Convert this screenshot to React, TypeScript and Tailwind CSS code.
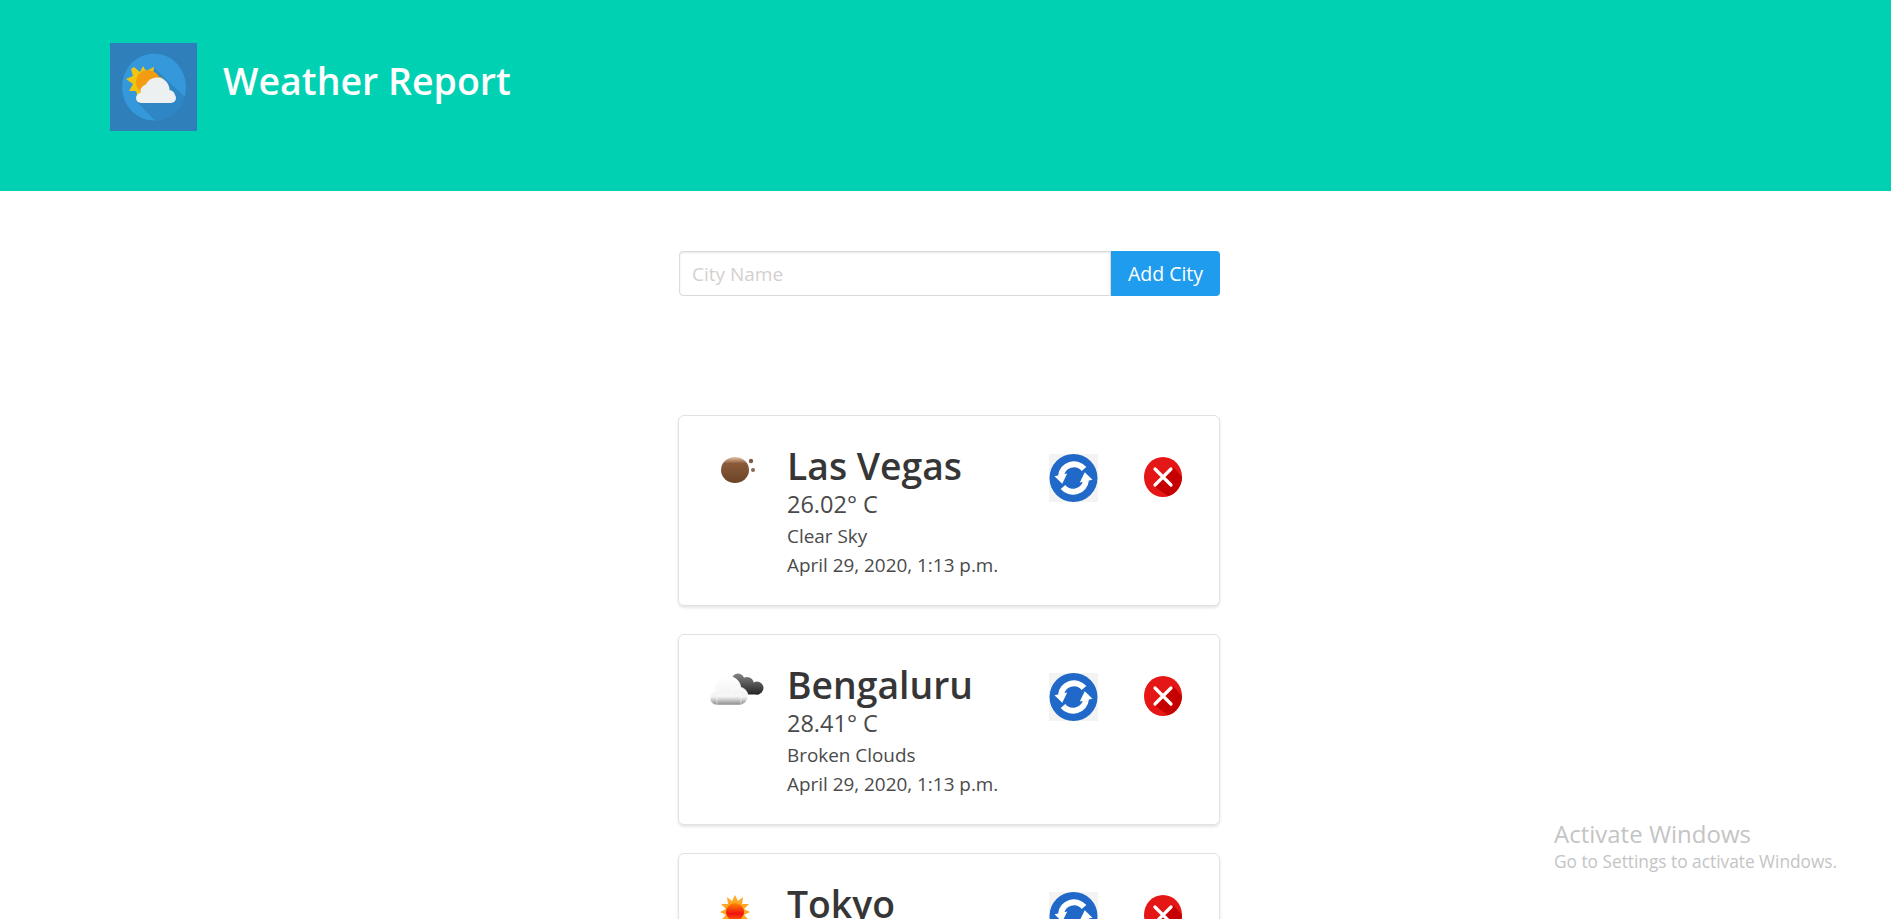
import React from 'react';

const font = { fontFamily: '"Open Sans", "Noto Sans", sans-serif' };

const LogoIcon = () => (
  <svg viewBox="0 0 87 88" className="w-[87px] h-[88px] shrink-0">
    <rect width="87" height="88" fill="#2e7fba" />
    <ellipse cx="44" cy="44" rx="32" ry="33.5" fill="#3498db" />
    <path d="M44 25 L75 54 A32 33.5 0 0 1 45 77.5 L27 59 Z" fill="#2e86c4" />
    <path d="M24 24l6 5 3-6 3 5 8-4-1 8 10 3-6 6 3 5-6 3-16 6-2-7-7 0 4-7-7-5 7-3-2-7z" fill="#f1c40f" />
    <circle cx="38" cy="39" r="12" fill="#f39c12" />
    <g fill="#ecf0f1">
      <rect x="26" y="50" width="40" height="10" rx="5" />
      <circle cx="47" cy="47" r="12.5" />
      <circle cx="37" cy="48" r="6.5" />
      <circle cx="59" cy="53" r="6" />
    </g>
  </svg>
);

const ClearIcon = () => (
  <svg viewBox="0 0 64 50" className="w-[64px] h-[50px]">
    <defs>
      <linearGradient id="moon" x1="0" y1="0" x2="0" y2="1">
        <stop offset="0" stopColor="#e6c2a4" />
        <stop offset="0.25" stopColor="#8a5a3a" />
        <stop offset="1" stopColor="#6b4426" />
      </linearGradient>
    </defs>
    <ellipse cx="34" cy="29" rx="14" ry="13" fill="url(#moon)" />
    <circle cx="50" cy="20" r="2.2" fill="#7a5a48" />
    <circle cx="52" cy="29" r="2" fill="#8a6a58" />
  </svg>
);

const CloudsIcon = () => (
  <svg viewBox="0 0 64 50" className="w-[64px] h-[50px]">
    <defs>
      <linearGradient id="white" gradientUnits="userSpaceOnUse" x1="0" y1="16" x2="0" y2="45">
        <stop offset="0" stopColor="#ffffff" />
        <stop offset="0.72" stopColor="#f2f2f2" />
        <stop offset="0.88" stopColor="#b5b5b5" />
        <stop offset="1" stopColor="#8a8a8a" />
      </linearGradient>
      <linearGradient id="dark" gradientUnits="userSpaceOnUse" x1="0" y1="13" x2="0" y2="35">
        <stop offset="0" stopColor="#888888" />
        <stop offset="1" stopColor="#222222" />
      </linearGradient>
    </defs>
    <g fill="url(#dark)">
      <circle cx="37" cy="20" r="6.5" />
      <circle cx="46" cy="24" r="7" />
      <circle cx="56" cy="28" r="6.5" />
      <rect x="36" y="26" width="22" height="8.5" />
    </g>
    <g fill="url(#white)" stroke="#ffffff" strokeWidth="0.5">
      <circle cx="27" cy="29" r="13" />
      <circle cx="16" cy="38" r="7" />
      <circle cx="38" cy="36" r="9" />
      <rect x="16" y="35" width="24" height="10" />
    </g>
  </svg>
);

const SunIcon = () => (
  <svg viewBox="0 0 64 50" className="w-[64px] h-[50px]">
    <defs>
      <linearGradient id="sun" x1="0" y1="0" x2="0" y2="1">
        <stop offset="0" stopColor="#ff8a00" />
        <stop offset="0.6" stopColor="#f01010" />
        <stop offset="1" stopColor="#ff6a00" />
      </linearGradient>
    </defs>
    <g transform="translate(4 5)">
      <path d="M30 11l3 6 5-4-1 7 7 0-5 5 6 3-6 3 5 5-7 0 1 7-5-4-3 6-3-6-5 4 1-7-7 0 5-5-6-3 6-3-5-5 7 0-1-7 5 4z" fill="#ffa726" />
      <circle cx="30" cy="28" r="9" fill="url(#sun)" />
    </g>
  </svg>
);

const RefreshIcon = () => (
  <svg viewBox="0 0 49 48" className="w-[49px] h-[48px]">
    <rect width="49" height="48" fill="#f3f3f3" />
    <circle cx="24.5" cy="24" r="24" fill="#2069c9" />
    <g fill="none" stroke="#ffffff" strokeWidth="6">
      <path d="M12 22a13 13 0 0 1 23-7" />
      <path d="M37 26a13 13 0 0 1-23 7" />
    </g>
    <g fill="#ffffff">
      <path d="M6 21h13l-7 9z" transform="rotate(-12 12 24)" />
      <path d="M43 27H30l7-9z" transform="rotate(-12 37 24)" />
    </g>
  </svg>
);

const CloseIcon = () => (
  <svg viewBox="0 0 38 40" className="w-[38px] h-[40px]">
    <ellipse cx="19" cy="20" rx="19" ry="20" fill="#e51616" />
    <path d="M29 10 L38 20 A19 20 0 0 1 24 39 L10 29 Z" fill="#c40000" />
    <path d="M11 12 L27 28 M27 12 L11 28" stroke="#ffffff" strokeWidth="3.2" strokeLinecap="round" />
  </svg>
);

interface CityCardProps {
  name: string;
  temp: string;
  desc: string;
  time: string;
  icon: React.ReactNode;
}

const CityCard: React.FC<CityCardProps> = ({ name, temp, desc, time, icon }) => (
  <div className="w-[542px] h-[191px] shrink-0 bg-white rounded-[6px] border border-[#e2e2e2] shadow-[0_2px_3px_rgba(10,10,10,0.1)] flex pl-[22px] pt-[20px]">
    <div className="w-[86px] pt-[5px] shrink-0">{icon}</div>
    <div className="w-[262px] shrink-0 pt-[6px]">
      <div className="text-[37.3px] leading-[47px] font-[550] text-[#363636]">{name}</div>
      <div className="text-[23.5px] leading-[30px] text-[#4a4a4a]">{temp}</div>
      <div className="text-[18.9px] leading-[29px] text-[#4a4a4a] mt-[3px]">{desc}</div>
      <div className="text-[18.9px] leading-[29px] text-[#4a4a4a]">{time}</div>
    </div>
    <div className="pt-[18px] shrink-0"><RefreshIcon /></div>
    <div className="pt-[21px] pl-[46px] shrink-0"><CloseIcon /></div>
  </div>
);

export default function App() {
  return (
    <div className="relative h-screen overflow-hidden bg-white" style={font}>
      <header className="h-[191px] bg-[#00d1b2] pl-[110px] pt-[43px] flex items-start gap-[26px]">
        <LogoIcon />
        <h1 className="text-[37.5px] leading-[76px] font-semibold text-white">Weather Report</h1>
      </header>

      <div className="flex flex-col items-center pl-[7px]">
        <div className="w-[541px] flex mt-[60px] h-[45px] ml-[1px]">
          <input
            placeholder="City Name"
            className="flex-1 min-w-0 h-full border border-[#dbdbdb] rounded-l-[4px] px-[12px] text-[19px] text-[#363636] placeholder:text-[#d5cfcf] shadow-[inset_0_1px_2px_rgba(10,10,10,0.1)] outline-none"
          />
          <button className="w-[109px] h-full bg-[#209cee] text-white text-[19.5px] rounded-r-[4px]">Add City</button>
        </div>

        <div className="flex flex-col gap-[28px] mt-[119px]">
          <CityCard name="Las Vegas" temp="26.02° C" desc="Clear Sky" time="April 29, 2020, 1:13 p.m." icon={<ClearIcon />} />
          <CityCard name="Bengaluru" temp="28.41° C" desc="Broken Clouds" time="April 29, 2020, 1:13 p.m." icon={<CloudsIcon />} />
          <CityCard name="Tokyo" temp="" desc="" time="" icon={<SunIcon />} />
        </div>
      </div>

      <div className="absolute left-[1554px] top-[819px] text-[#c4c4c4]">
        <div className="text-[24px] leading-[30px]">Activate Windows</div>
        <div className="text-[17.3px] leading-[26px]">Go to Settings to activate Windows.</div>
      </div>
    </div>
  );
}
